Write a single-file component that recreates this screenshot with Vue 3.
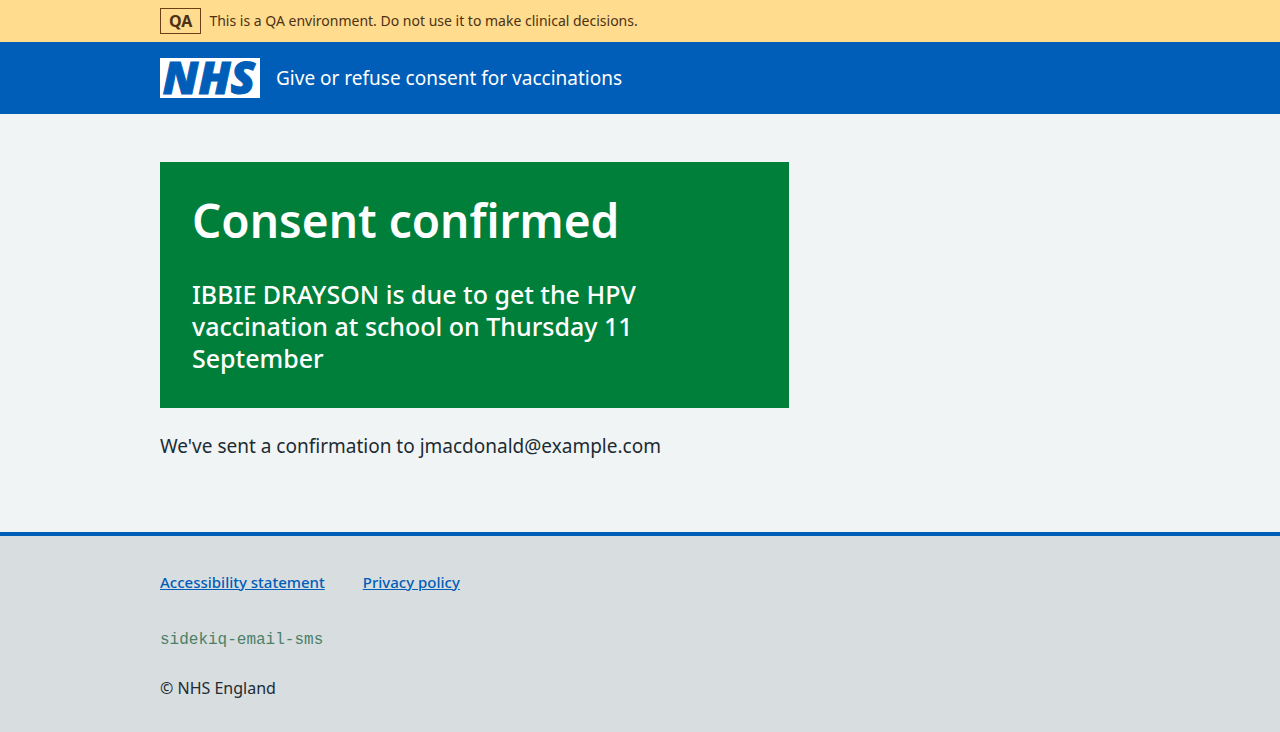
<script setup>
const footerLinks = [
  { label: 'Accessibility statement', href: '#accessibility' },
  { label: 'Privacy policy', href: '#privacy' },
]
</script>

<template>
  <div class="page">
    <div class="environment">
      <div class="container environment-row">
        <strong class="tag">QA</strong>
        <span>This is a QA environment. Do not use it to make clinical decisions.</span>
      </div>
    </div>

    <header class="header">
      <div class="container">
        <a class="service" href="#home">
          <svg class="logo" viewBox="0 0 100 40" role="img" aria-label="NHS">
            <rect width="100" height="40" fill="#fff" />
            <text class="logo-text" x="49" y="36" text-anchor="middle">NHS</text>
          </svg>
          <span>Give or refuse consent for vaccinations</span>
        </a>
      </div>
    </header>

    <main class="main container">
      <section class="panel">
        <h1>Consent confirmed</h1>
        <p>IBBIE DRAYSON is due to get the HPV vaccination at school on Thursday 11 September</p>
      </section>
      <p class="confirmation">We've sent a confirmation to jmacdonald@example.com</p>
    </main>

    <footer class="footer">
      <div class="container">
        <ul class="links">
          <li v-for="link in footerLinks" :key="link.href">
            <a :href="link.href">{{ link.label }}</a>
          </li>
        </ul>
        <p class="release">sidekiq-email-sms</p>
        <p>© NHS England</p>
      </div>
    </footer>
  </div>
</template>

<style>
body {
  margin: 0;
  background: #d8dde0;
}
</style>

<style scoped>
.page {
  display: flex;
  flex-direction: column;
  min-height: 100vh;
  background: #f0f4f5;
  color: #212b32;
  font-family: "Noto Sans", "Open Sans", sans-serif;
}

.container {
  box-sizing: border-box;
  width: 100%;
  max-width: 1024px;
  margin: 0 auto;
  padding: 0 32px;
}

h1,
p {
  margin: 0;
}

.environment {
  padding: 8px 0;
  background: #ffdc8e;
  color: #4d3115;
  font-size: 14px;
  line-height: 24px;
}

.environment-row {
  display: flex;
  align-items: center;
  gap: 8px;
}

.tag {
  border: 1px solid #6b4016;
  padding: 0 8px;
  font-size: 16px;
  font-weight: 700;
}

.header {
  padding: 16px 0;
  background: #005eb8;
}

.service {
  display: inline-flex;
  align-items: center;
  gap: 16px;
  color: #fff;
  font-size: 19px;
  line-height: 28px;
  text-decoration: none;
  vertical-align: top;
}

.logo {
  width: 100px;
  height: 40px;
  overflow: visible;
}

.logo-text {
  fill: #005eb8;
  stroke: #005eb8;
  stroke-width: 1px;
  font-family: "Open Sans", sans-serif;
  font-size: 45px;
  font-style: italic;
  font-weight: 800;
}

.main {
  padding-top: 48px;
  padding-bottom: 72px;
}

.panel {
  box-sizing: border-box;
  max-width: 629px;
  margin-bottom: 24px;
  padding: 32px 32px 34px;
  background: #007f3b;
  color: #fff;
}

.panel h1 {
  margin-bottom: 32px;
  font-size: 46px;
  font-weight: 600;
  line-height: 52px;
}

.panel p {
  max-width: 480px;
  font-size: 25px;
  font-weight: 500;
  line-height: 32px;
}

.confirmation {
  font-size: 19px;
  line-height: 28px;
}

.footer {
  flex: 1;
  padding: 32px 0;
  border-top: 4px solid #005eb8;
  background: #d8dde0;
  font-size: 16px;
  line-height: 24px;
}

.links {
  display: flex;
  gap: 38px;
  margin: 0 0 32px;
  padding: 0;
  font-size: 15px;
  font-weight: 500;
  line-height: 28px;
  list-style: none;
}

.links a {
  color: #005eb8;
}

.release {
  margin-bottom: 24px;
  color: #4c8068;
  font-family: "Liberation Mono", monospace;
}
</style>
